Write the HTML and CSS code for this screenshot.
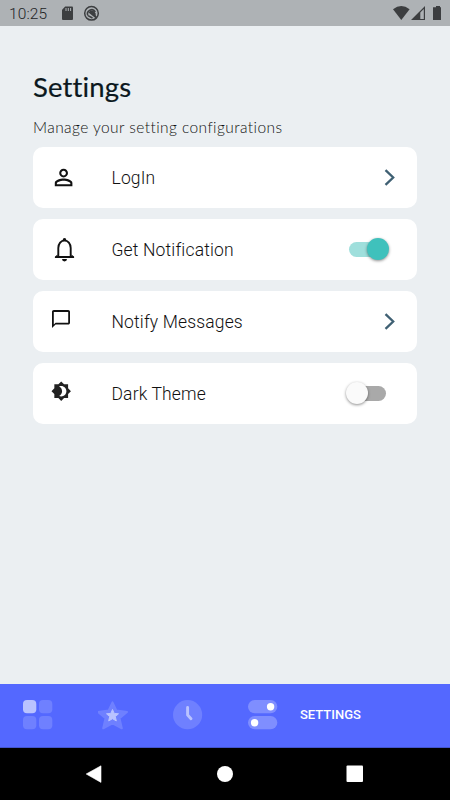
FILE: index.html
```html
<!DOCTYPE html>
<html lang="en">

<head>
    <meta charset="UTF-8">
    <meta name="viewport" content="width=device-width, initial-scale=1.0">
    <title>Settings</title>

    <link rel="stylesheet" href="styles.css">
</head>

<body>
    <header class="status-bar">
        <span class="time">10:25</span>
        <svg class="status-left" width="42" height="26" viewBox="0 0 42 26">
            <path fill="#3c3e40" d="M5.2 6.500H12q1 0 1 1v11.500q0 1-1 1H3q-1 0-1-1V9.700z" />
            <path stroke="#aeb2b5" stroke-width="1" d="M6 8v3M8.300 8v3M10.600 8v3" />
            <circle cx="31.500" cy="13.300" r="6.800" fill="none" stroke="#3c3e40" stroke-width="1.500" />
            <path fill="none" stroke="#3c3e40" stroke-width="1.600" d="M27.800 15.500a4.200 4.200 0 0 1 7.500-3.700" />
            <path fill="#3c3e40" d="M28.500 12.500q3-3.500 6-.8 1.800 1.800 1.200 3.600l1.300 1.700-1.300 1.200z" />
            <path stroke="#3c3e40" stroke-width="1.600" d="M28 15.600l4.500 2.400" />
        </svg>
        <svg class="status-right" width="50" height="26" viewBox="0 0 50 26">
            <path fill="#3c3e40" d="M1 9.300Q9.300 2.700 17.600 9.300L9.300 20z" />
            <path fill="#3c3e40" fill-rule="evenodd" d="M33 6v14H19zM28.300 12.500V19H31.800V9z" />
            <path fill="#3c3e40" d="M42 7.300h2V6h4v1.300h1V20h-8V7.300z" />
        </svg>
    </header>

    <main class="content">
        <h1>Settings</h1>
        <p class="subtitle">Manage your setting configurations</p>

        <div class="card">
            <svg class="card-icon" viewBox="0 0 28 29">
                <path transform="translate(0.400 1.300) scale(1.100)" d="M12 5.900c1.160 0 2.100.94 2.100 2.100s-.94 2.100-2.100 2.100S9.900 9.160 9.900 8s.94-2.100 2.100-2.100m0 9c2.970 0 6.100 1.460 6.100 2.100v1.100H5.900V17c0-.64 3.130-2.100 6.100-2.100M12 4C9.790 4 8 5.790 8 8s1.790 4 4 4 4-1.790 4-4-1.790-4-4-4zm0 9c-2.670 0-8 1.340-8 4v3h16v-3c0-2.660-5.330-4-8-4z" />
            </svg>
            <span class="label">LogIn</span>
            <svg class="chevron" width="12" height="18" viewBox="0 0 12 18">
                <path d="M1.500 1.100 9.200 8.500l-7.700 7.400" />
            </svg>
        </div>

        <div class="card">
            <svg class="card-icon" viewBox="0 0 28 29">
                <path fill="none" stroke="#111" stroke-width="1.900" d="M5.600 22h18M8.300 21.500V13a6.200 7.600 0 0 1 12.400 0v8.500" />
                <path d="M12.700 6.200V4.900a1.800 1.800 0 0 1 3.600 0v1.300zM12 24.100h5a2.500 2.300 0 0 1-5 0zM4.900 22.900v-1.200l2.600-2.200v3.400zM24.100 22.900v-1.200l-2.600-2.200v3.400z" />
            </svg>
            <span class="label">Get Notification</span>
            <span class="switch on"></span>
        </div>

        <div class="card">
            <svg class="card-icon" viewBox="0 0 28 29">
                <path transform="translate(0.200 1.300) scale(0.900)" d="M20 2H4c-1.100 0-2 .9-2 2v18l4-4h14c1.100 0 2-.9 2-2V4c0-1.100-.9-2-2-2zm0 14H6l-2 2V4h16v12z" />
            </svg>
            <span class="label">Notify Messages</span>
            <svg class="chevron" width="12" height="18" viewBox="0 0 12 18">
                <path d="M1.500 1.100 9.200 8.500l-7.700 7.400" />
            </svg>
        </div>

        <div class="card">
            <svg class="card-icon" viewBox="0 0 28 29">
                <path fill="#222" transform="translate(0.900 1.900) scale(0.860)" d="M20 8.690V4h-4.690L12 .69 8.690 4H4v4.690L.69 12 4 15.310V20h4.690L12 23.310 15.310 20H20v-4.690L23.310 12 20 8.690zM12 18c-.89 0-1.740-.2-2.500-.55C11.560 16.500 13 14.420 13 12s-1.440-4.500-3.500-5.450C10.260 6.200 11.110 6 12 6c3.310 0 6 2.690 6 6s-2.690 6-6 6z" />
            </svg>
            <span class="label">Dark Theme</span>
            <span class="switch"></span>
        </div>
    </main>

    <nav class="tab-bar">
        <svg width="30" height="30" viewBox="0 0 30 30">
            <rect width="13.300" height="13.300" rx="4" fill="#bac3ff" />
            <rect x="16" width="13.300" height="13.300" rx="4" fill="#6f80ff" />
            <rect y="16" width="13.300" height="13.300" rx="4" fill="#6f80ff" />
            <rect x="16" y="16" width="13.300" height="13.300" rx="4" fill="#6f80ff" />
        </svg>
        <svg width="30" height="30" viewBox="0 0 30 30">
            <path fill="#6f80ff" stroke="#6f80ff" stroke-width="2" stroke-linejoin="round" d="M14.500 2.300 18.300 10.500 29 12 21.500 18.300 23.800 28.300 14.500 23.300 5.200 28.300 7.500 18.300 0 12 10.700 10.500z" />
            <path fill="#bac3ff" stroke="#bac3ff" stroke-linejoin="round" d="M14.500 9.500 16.200 13.400 20.500 13.800 17.300 16.600 18.300 20.900 14.500 18.700 10.700 20.900 11.700 16.600 8.500 13.800 12.800 13.400z" />
        </svg>
        <svg width="30" height="30" viewBox="0 0 30 30">
            <circle cx="14.600" cy="14.700" r="14.600" fill="#6f80ff" />
            <path fill="none" stroke="#bac3ff" stroke-width="2.900" stroke-linecap="round" stroke-linejoin="round" d="M14.600 7.500v7.600l3.400 3.600" />
        </svg>
        <svg width="30" height="30" viewBox="0 0 30 30">
            <rect width="29.300" height="13.300" rx="6.600" fill="#7f8eff" />
            <rect y="16" width="29.300" height="13.300" rx="6.600" fill="#7f8eff" />
            <circle cx="22.600" cy="6.700" r="3.700" fill="#fff" />
            <circle cx="6.600" cy="22.700" r="3.700" fill="#fff" />
        </svg>
        <span class="tab-label">SETTINGS</span>
    </nav>

    <footer class="system-nav">
        <svg width="18" height="18" viewBox="0 0 18 18">
            <path d="M1.200 9 16 .800v16.600z" stroke="#fff" stroke-linejoin="round" stroke-width=".6" />
        </svg>
        <svg width="18" height="18" viewBox="0 0 18 18">
            <circle cx="9" cy="9" r="8" />
        </svg>
        <svg width="18" height="18" viewBox="0 0 18 18">
            <rect x=".5" y=".5" width="16.500" height="16.500" rx="1" />
        </svg>
    </footer>
</body>

</html>
```

FILE: styles.css
```css
* {
    box-sizing: border-box;
}

body {
    margin: 0;
    height: 800px;
    display: flex;
    flex-direction: column;
    background-color: #ebeff2;
    font-family: Roboto, "Liberation Sans", sans-serif;
    color: #111;
    overflow: hidden;
}

.status-bar {
    display: flex;
    height: 26px;
    padding: 0 8px 0 9px;
    background-color: #aeb2b5;
}

.time {
    width: 51px;
    font-size: 15.5px;
    font-weight: 300;
    line-height: 28px;
    letter-spacing: 0.1px;
    color: #222426;
}

.status-right {
    margin-left: auto;
}

.content {
    flex: 1;
    padding: 44px 33px 0;
}

h1 {
    margin: 0;
    font-family: Lato, sans-serif;
    font-size: 27.5px;
    font-weight: 400;
    line-height: 34px;
    letter-spacing: 0.15px;
    font-variant-ligatures: none;
    -webkit-text-stroke: 0.2px #0b1820;
    color: #0b1820;
}

.subtitle {
    margin: 12px 0 9px;
    font-family: Lato, sans-serif;
    font-size: 15.5px;
    font-weight: 300;
    line-height: 22px;
    letter-spacing: 0.42px;
    font-variant-ligatures: none;
}

.card {
    display: flex;
    align-items: center;
    height: 61px;
    margin-bottom: 11px;
    padding: 0 21px 0 17px;
    background-color: #fff;
    border-radius: 10px;
}

.card-icon {
    width: 28px;
    height: 29px;
    margin-right: 33.5px;
    fill: #111;
}

.label {
    flex: 1;
    padding-top: 1px;
    font-size: 17.5px;
    font-weight: 350;
    letter-spacing: 0.15px;
}

.chevron path {
    fill: none;
    stroke: #3f6073;
    stroke-width: 2.3;
}

.switch {
    position: relative;
    width: 37px;
    height: 15px;
    margin-right: 10px;
    border-radius: 8px;
    background-color: #a9a9a9;
}

/* thumb */
.switch::after {
    content: "";
    position: absolute;
    top: -4px;
    left: -3px;
    width: 22px;
    height: 22px;
    border-radius: 50%;
    background-color: #fafafa;
    box-shadow: 0 1px 3px rgba(0, 0, 0, 0.45);
}

.switch.on {
    background-color: #9fdfdc;
}

.switch.on::after {
    left: 18px;
    background-color: #3fc1bc;
}

.tab-bar {
    display: flex;
    align-items: center;
    gap: 45px;
    height: 64px;
    padding: 0 23px 2px;
    background-color: #5468ff;
    border-bottom: 1px solid #4254cc;
}

.tab-label {
    margin-left: -23px;
    font-size: 13px;
    font-weight: 500;
    color: #fff;
}

.system-nav {
    display: flex;
    align-items: center;
    justify-content: space-between;
    height: 52px;
    padding: 0 86px 0 85px;
    background-color: #000;
    fill: #fff;
}
```
